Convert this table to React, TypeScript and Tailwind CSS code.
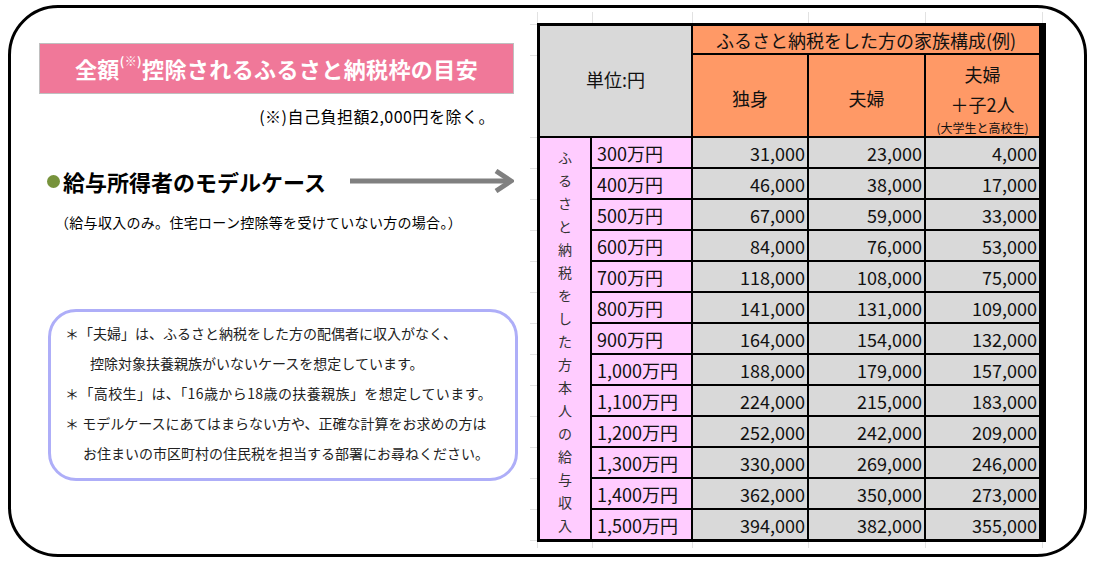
import React from "react";

const rows = [
  ["300万円", "31,000", "23,000", "4,000"],
  ["400万円", "46,000", "38,000", "17,000"],
  ["500万円", "67,000", "59,000", "33,000"],
  ["600万円", "84,000", "76,000", "53,000"],
  ["700万円", "118,000", "108,000", "75,000"],
  ["800万円", "141,000", "131,000", "109,000"],
  ["900万円", "164,000", "154,000", "132,000"],
  ["1,000万円", "188,000", "179,000", "157,000"],
  ["1,100万円", "224,000", "215,000", "183,000"],
  ["1,200万円", "252,000", "242,000", "209,000"],
  ["1,300万円", "330,000", "269,000", "246,000"],
  ["1,400万円", "362,000", "350,000", "273,000"],
  ["1,500万円", "394,000", "382,000", "355,000"],
];

const sideLabel = "ふるさと納税をした方本人の給与収入".split("");

// faint spreadsheet gridlines that peek out around the table (coords inside the picture box)
const gridY = [16, 47, ...Array.from({ length: 14 }, (_, i) => 129 + i * 31)];
const gridX = [17, 72, 172, 288, 405, 522];

function Arrow() {
  return (
    <svg width="166" height="24" viewBox="0 0 166 24" className="shrink-0">
      <line x1="2" y1="12" x2="160" y2="12" stroke="#808080" strokeWidth="5" />
      <polyline points="148,2 163,12 148,22" fill="none" stroke="#808080" strokeWidth="5" />
    </svg>
  );
}

function FeeTable() {
  return (
    <div className="grid grid-cols-[50px_99px_114px_115px_113px] grid-rows-[27px_81px_repeat(13,29px)] gap-[2px] bg-black border-[3px] border-black text-[18px] text-[#111] leading-none">
      <div className="col-span-2 row-span-2 bg-[#d9d9d9] flex items-center justify-center pb-[4px]">単位:円</div>
      <div className="col-span-3 bg-[#ff9966] flex items-center justify-center">ふるさと納税をした方の家族構成(例)</div>
      <div className="bg-[#ff9966] flex items-center justify-center pt-[4px]">独身</div>
      <div className="bg-[#ff9966] flex items-center justify-center pt-[4px]">夫婦</div>
      <div className="bg-[#ff9966] flex flex-col items-center pt-[4px]">
        <span className="leading-[30px]">夫婦</span>
        <span className="leading-[30px]">＋子2人</span>
        <span className="text-[12px] leading-[18px]">(大学生と高校生)</span>
      </div>
      <div className="col-start-1 row-start-3 row-span-13 bg-[#ffccff] flex flex-col items-center pt-[8px] text-[14px] text-[#333]">
        {sideLabel.map((c, i) => (
          <span key={i} className="h-[23px] leading-[23px]">{c}</span>
        ))}
      </div>
      {rows.map((r) => (
        <React.Fragment key={r[0]}>
          <div className="bg-[#ffccff] flex items-center pl-[5px]">{r[0]}</div>
          <div className="bg-[#d9d9d9] flex items-center justify-end pr-[2px]">{r[1]}</div>
          <div className="bg-[#d9d9d9] flex items-center justify-end pr-[2px]">{r[2]}</div>
          <div className="bg-[#d9d9d9] flex items-center justify-end pr-[2px]">{r[3]}</div>
        </React.Fragment>
      ))}
    </div>
  );
}

export default function App() {
  return (
    <div className="w-[1097px] h-[569px] bg-white overflow-hidden pt-[5px] pl-[8px] font-['Noto_Sans_CJK_JP',sans-serif] text-black">
      <div className="w-[1079px] h-[552px] border-[3px] border-black rounded-[50px] flex">
        {/* left column */}
        <div className="w-[509px] shrink-0 flex flex-col pt-[35px]">
          <div className="ml-[28px] w-[475px] h-[51px] bg-[#f07899] border border-[#bfbfbf] flex items-center justify-center text-white font-bold text-[22px] tracking-[0.4px] leading-none pb-[2px]">
            全額<sup className="text-[12px] font-bold -top-[7px]">(※)</sup>控除されるふるさと納税枠の目安
          </div>
          <p className="mt-[10px] w-[484px] text-right text-[16px] leading-[24px] tracking-[0.5px]">(※)自己負担額2,000円を除く。</p>

          <div className="mt-[38px] h-[30px] flex items-center">
            <span className="ml-[36px] w-[13px] h-[13px] rounded-full bg-[#77933c] shrink-0" />
            <h2 className="ml-[3px] w-[285px] text-[22px] font-bold leading-[30px] whitespace-nowrap">給与所得者のモデルケース</h2>
            <Arrow />
          </div>

          <p className="mt-[16px] ml-[44px] text-[14px] tracking-[0.3px] leading-[20px] whitespace-nowrap">（給与収入のみ。住宅ローン控除等を受けていない方の場合。）</p>

          <div className="mt-[77px] ml-[37px] w-[470px] h-[172px] border-[3px] border-[#aeaef8] rounded-[28px] pt-[6px] text-[14px] leading-[30px] text-[#222] whitespace-nowrap">
            <p className="pl-[14px]">＊「夫婦」は、ふるさと納税をした方の配偶者に収入がなく、</p>
            <p className="pl-[39px]">控除対象扶養親族がいないケースを想定しています。</p>
            <p className="pl-[14px] tracking-[0.4px]">＊「高校生」は、「16歳から18歳の扶養親族」を想定しています。</p>
            <p className="pl-[14px]">＊ モデルケースにあてはまらない方や、正確な計算をお求めの方は</p>
            <p className="pl-[32px]">お住まいの市区町村の住民税を担当する部署にお尋ねください。</p>
          </div>
        </div>

        {/* spreadsheet picture */}
        <div className="relative w-[526px] h-[541px] shrink-0 pl-[17px] pt-[15px]">
          <svg className="absolute inset-0" width="526" height="541">
            {gridY.map((y) => (
              <line key={"y" + y} x1="10" y1={y + 0.5} x2="526" y2={y + 0.5} stroke="#e2e2e2" strokeWidth="1" />
            ))}
            {gridX.map((x) => (
              <line key={"x" + x} x1={x + 0.5} y1="4" x2={x + 0.5} y2="540" stroke="#e2e2e2" strokeWidth="1" />
            ))}
          </svg>
          <div className="relative">
            <FeeTable />
          </div>
        </div>
      </div>
    </div>
  );
}
